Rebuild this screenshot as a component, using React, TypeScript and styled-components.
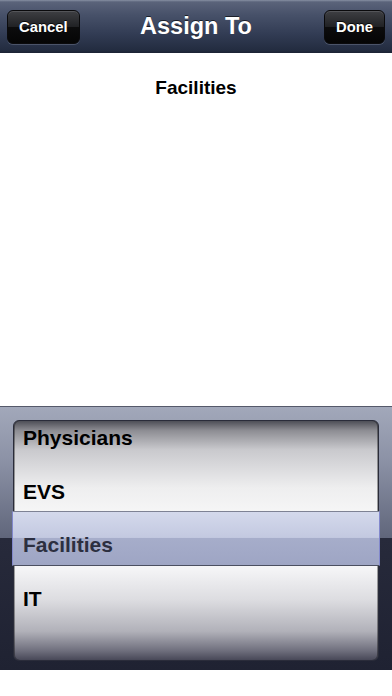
import React from "react";
import styled, { createGlobalStyle } from "styled-components";

const GlobalStyle = createGlobalStyle`
  html, body {
    margin: 0;
    padding: 0;
    background: #ffffff;
  }
  body {
    font-family: "Liberation Sans", Arial, sans-serif;
  }
  #root {
    height: 100vh;
  }
`;

const Screen = styled.div`
  display: flex;
  flex-direction: column;
  height: 100%;
  background: #ffffff;
`;

const NavBar = styled.header`
  height: 53px;
  flex: none;
  display: grid;
  grid-template-columns: 1fr auto 1fr;
  align-items: center;
  padding: 0 7px;
  box-sizing: border-box;
  background: linear-gradient(
    #8790a3 0px,
    #5a637a 2px,
    #48526a 14px,
    #323c54 34px,
    #232c40 50px,
    #1b2233 53px
  );
`;

const NavTitle = styled.h1`
  margin: 0;
  color: #ffffff;
  font-size: 23.5px;
  font-weight: 700;
  text-shadow: 0 -1px 0 rgba(0, 0, 0, 0.6);
`;

const NavButton = styled.button<{ $side: "left" | "right" }>`
  justify-self: ${(p) => (p.$side === "left" ? "start" : "end")};
  height: 34px;
  padding: 0 11px;
  border-radius: 6px;
  border: 1px solid #0a0a0c;
  background: linear-gradient(#3e3f43 0%, #202124 50%, #0c0c0d 51%, #050505 100%);
  box-shadow: 0 1px 0 rgba(140, 150, 170, 0.35), inset 0 1px 0 rgba(255, 255, 255, 0.12);
  color: #ffffff;
  font-family: "Liberation Sans", Arial, sans-serif;
  font-size: 14.8px;
  font-weight: 700;
  text-shadow: 0 -1px 0 rgba(0, 0, 0, 0.8);
`;

const Content = styled.main`
  flex: 1;
  padding-top: 24px;
  text-align: center;
`;

const Heading = styled.h2`
  margin: 0;
  font-size: 19px;
  font-weight: 700;
  color: #000000;
`;

const PickerFrame = styled.section`
  position: relative;
  height: 264px;
  flex: none;
  box-sizing: border-box;
  padding: 13px 13px 9px;
  border-top: 1px solid #55596a;
  background: linear-gradient(
    #a2a8ba 0%,
    #8c92a6 20%,
    #60667b 49.9%,
    #272a3b 50%,
    #1f2232 100%
  );
`;

const Wheel = styled.div`
  height: 100%;
  border-radius: 6px;
  overflow: hidden;
  border: 1px solid #2a2c3a;
  box-sizing: border-box;
  background: linear-gradient(
    #4e4f57 0%,
    #8d8d93 4%,
    #c9c9cd 12%,
    #eeeeef 28%,
    #fbfbfb 45%,
    #f4f4f6 62%,
    #dcdce0 75%,
    #b1b1b9 88%,
    #70707e 96%,
    #484858 100%
  );
  box-shadow: inset 1px 0 0 rgba(0, 0, 0, 0.35), inset -1px 0 0 rgba(0, 0, 0, 0.35);
`;

const RowList = styled.ul`
  list-style: none;
  margin: -10px 0 0;
  padding: 0;
`;

const Row = styled.li<{ $selected?: boolean }>`
  position: relative;
  z-index: 2;
  height: 53.7px;
  display: flex;
  align-items: center;
  padding-left: 9px;
  font-size: 21px;
  font-weight: 700;
  color: ${(p) => (p.$selected ? "#2c2f40" : "#000000")};
`;

const SelectionBar = styled.div`
  position: absolute;
  z-index: 1;
  left: 12px;
  right: 12px;
  top: 104px;
  height: 55px;
  box-sizing: border-box;
  border-top: 1px solid #7e8294;
  border-bottom: 1px solid #4b4f60;
  border-left: 1px solid #8288cc;
  border-right: 1px solid #8288cc;
  background: linear-gradient(
    #d4d9ec 0%,
    #c3c9e0 48%,
    #a6adca 50%,
    #9ea5c4 100%
  );
`;

const BottomGap = styled.div`
  height: 26px;
  flex: none;
  background: #ffffff;
`;

const options = ["Physicians", "EVS", "Facilities", "IT"];
const selected = "Facilities";

export default function App() {
  return (
    <>
      <GlobalStyle />
      <Screen>
        <NavBar>
          <NavButton $side="left">Cancel</NavButton>
          <NavTitle>Assign To</NavTitle>
          <NavButton $side="right">Done</NavButton>
        </NavBar>
        <Content>
          <Heading>{selected}</Heading>
        </Content>
        <PickerFrame>
          <Wheel>
            <RowList>
              {options.map((o) => (
                <Row key={o} $selected={o === selected}>
                  {o}
                </Row>
              ))}
            </RowList>
          </Wheel>
          <SelectionBar />
        </PickerFrame>
        <BottomGap />
      </Screen>
    </>
  );
}
